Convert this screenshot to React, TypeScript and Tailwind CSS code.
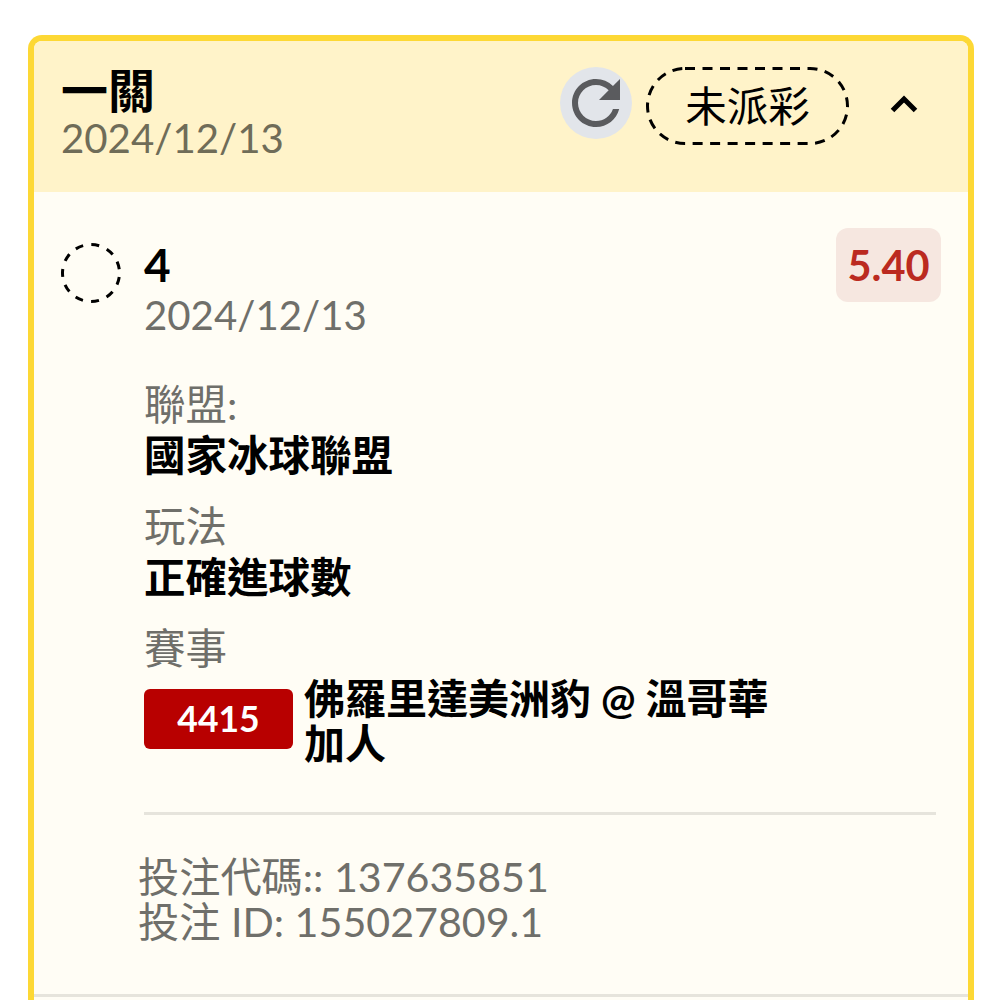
import { MdRefresh } from "react-icons/md";

const fontStack = "font-['Lato','Noto_Sans_CJK_TC',sans-serif]";

function Field({ label, value }: { label: string; value: string }) {
  return (
    <div className="mb-[27px]">
      <div className="leading-[44px] text-[#6f6f6a]">{label}</div>
      <div className="mt-[7px] font-bold leading-[44px] text-black">{value}</div>
    </div>
  );
}

export default function App() {
  return (
    <div className={`${fontStack} h-[1000px] overflow-hidden bg-white pl-[28px] pt-[35px] text-[41.5px]`}>
      <div className="w-[946px] rounded-t-[14px] border-x-[6px] border-t-[6px] border-[#fdd835] bg-[#fffdf5]">
        <div className="flex h-[151px] items-start justify-between rounded-t-[8px] bg-[#fff3c9] pl-[27px] pr-[50px] pt-[25px]">
          <div>
            <div className="text-[47px] font-bold leading-[48px] text-black">一關</div>
            <div className="mt-[1px] text-[40.2px] leading-[46px] text-[#6f6c58]">2024/12/13</div>
          </div>
          <div className="mt-[1px] flex items-center">
            <div className="mb-[6px] flex h-[72px] w-[72px] items-center justify-center rounded-full bg-[#e2e5ea]">
              <MdRefresh className="h-[72px] w-[72px] text-[#5a5b5e]" />
            </div>
            <div className="relative ml-[14px] flex h-[78px] w-[203px] items-center justify-center text-black">
              <svg viewBox="0 0 203 78" className="absolute inset-0 h-full w-full" fill="none">
                <rect x="1.5" y="1.5" width="200" height="75" rx="37.5" stroke="#000" strokeWidth="3" strokeDasharray="10 7.5" />
              </svg>
              未派彩
            </div>
            <svg viewBox="0 0 28 18" className="mb-[4px] ml-[41px] h-[18px] w-[28px]" fill="none">
              <path d="M2.5 15.5 14 4l11.5 11.5" stroke="#000" strokeWidth="5" />
            </svg>
          </div>
        </div>

        <div className="flex border-b-[3px] border-[#e6e4dc] pb-[50px] pl-[27px] pr-[27px] pt-[36px]">
          <svg viewBox="0 0 60 60" className="mt-[15px] h-[60px] w-[60px] shrink-0" fill="none">
            <circle cx="30" cy="30" r="28.5" stroke="#000" strokeWidth="3" strokeDasharray="8 8.3" strokeDashoffset="-4" />
          </svg>
          <div className="ml-[23px] min-w-0 flex-1">
            <div className="flex items-start justify-between">
              <div className="pt-[10px]">
                <div className="text-[46px] font-bold leading-[54px] text-black">4</div>
                <div className="text-[40.2px] leading-[46px] text-[#6f6f6a]">2024/12/13</div>
              </div>
              <div className="flex h-[74px] w-[105px] items-center justify-center rounded-[12px] bg-[#f6e7e0] text-[41.5px] font-bold text-[#bb2a20]">
                5.40
              </div>
            </div>
            <div className="mt-[44px] w-[792px]">
              <Field label="聯盟:" value="國家冰球聯盟" />
              <Field label="玩法" value="正確進球數" />
              <div className="leading-[44px] text-[#6f6f6a]">賽事</div>
              <div className="mt-[6px] flex items-center">
                <div className="mb-[4px] flex h-[60px] w-[149px] shrink-0 items-center justify-center rounded-[6px] bg-[#b80000] text-[35.5px] font-bold text-white">
                  4415
                </div>
                <div className="ml-[11px] w-[480px] text-[41px] font-bold leading-[45px] text-black">
                  佛羅里達美洲豹 @ 溫哥華加人
                </div>
              </div>
              <div className="mt-[46px] border-t-[3px] border-[#e6e4dc] pt-[39px]">
                <div className="-ml-[6px] text-[41.2px] leading-[45px] text-[#6f6f6a]">
                  <div>投注代碼:: 137635851</div>
                  <div>投注 ID: 155027809.1</div>
                </div>
              </div>
            </div>
          </div>
        </div>
        <div className="h-[40px]" />
      </div>
    </div>
  );
}
